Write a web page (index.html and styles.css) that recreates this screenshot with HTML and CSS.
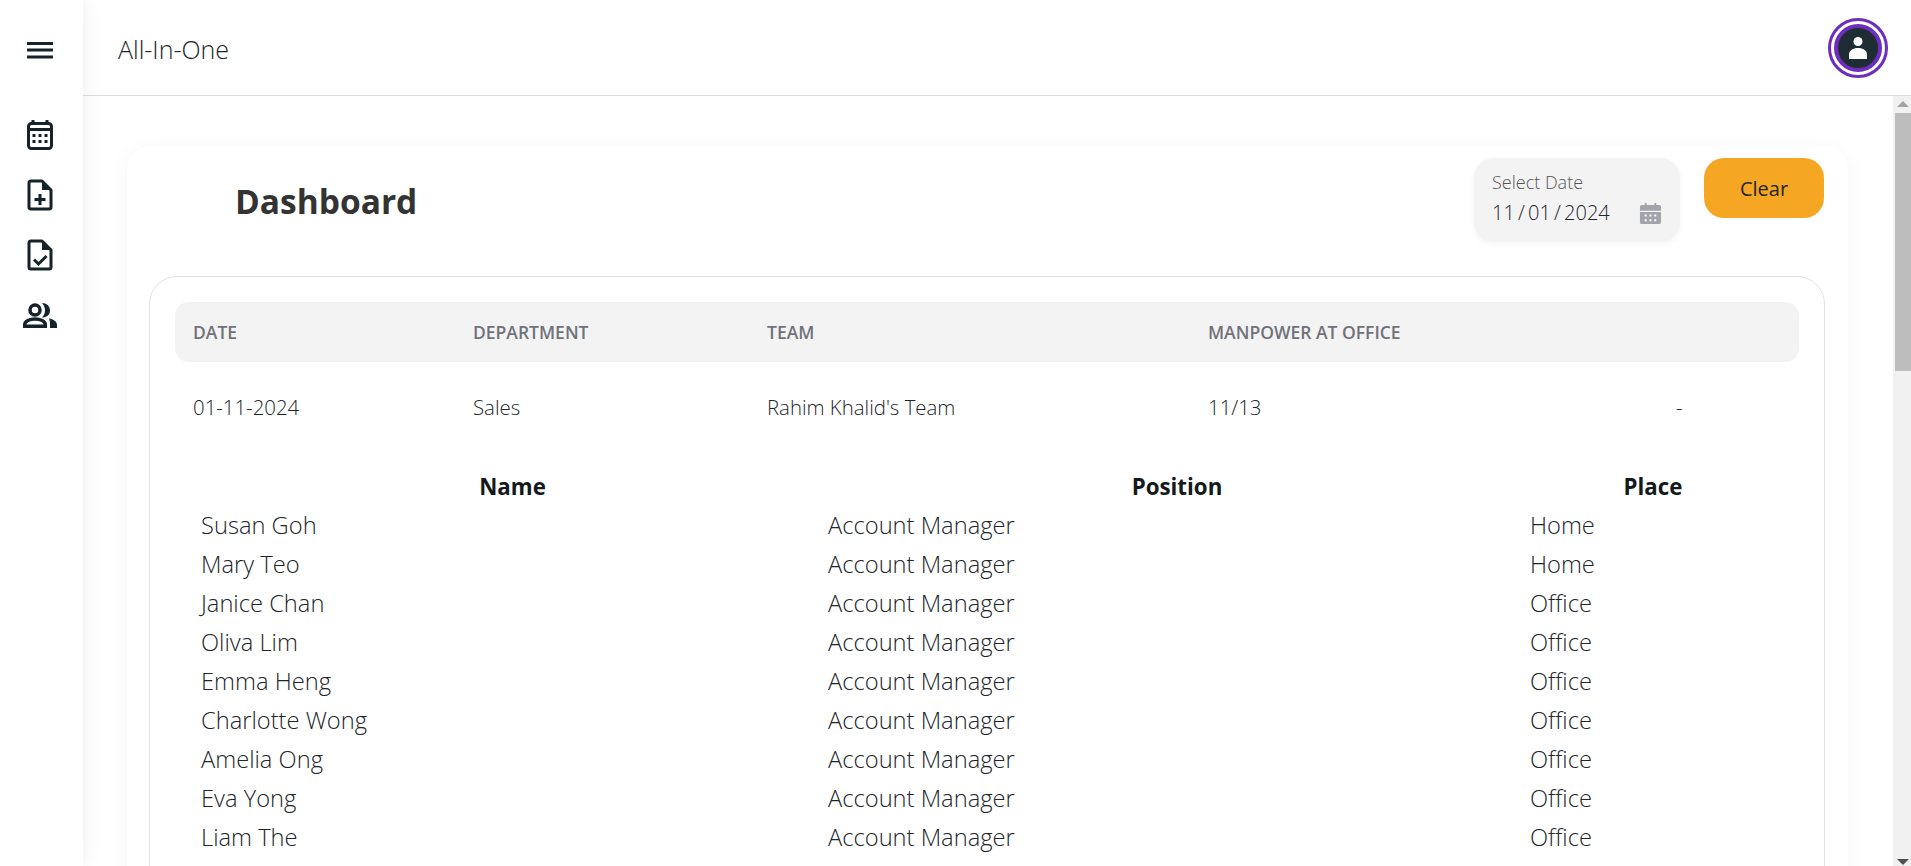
FILE: index.html
```html
<!DOCTYPE html>
<html lang="en">
<head>
    <meta charset="UTF-8">
    <meta name="viewport" content="width=device-width, initial-scale=1.0">
    <title>All-In-One</title>
    <link rel="stylesheet" href="styles.css">
</head>
<body>

<aside class="sidebar">
    <button class="side-btn menu-btn" aria-label="Menu">
        <svg width="28" height="18" viewBox="0 0 28 18"><path d="M1 2.500h26M1 9h26M1 16h26" stroke="#14232a" stroke-width="3"/></svg>
    </button>
    <nav class="side-nav">
        <a class="side-btn" href="#" aria-label="Calendar">
            <svg width="28" height="32" viewBox="0 0 28 32">
                <path d="M7 1v5M21 1v5" stroke="#14232a" stroke-width="3"/>
                <rect x="2.500" y="4.500" width="23" height="25" rx="3" fill="none" stroke="#14232a" stroke-width="3"/>
                <path d="M2.500 10.500h23" stroke="#14232a" stroke-width="3"/>
                <path d="M6.500 15h3v3h-3zM12.500 15h3v3h-3zM18.500 15h3v3h-3zM6.500 21h3v3h-3zM12.500 21h3v3h-3zM18.500 21h3v3h-3z" fill="#14232a"/>
            </svg>
        </a>
        <a class="side-btn" href="#" aria-label="New request">
            <svg width="26" height="32" viewBox="0 0 26 32">
                <path d="M4 2h11l9 9v17a2 2 0 0 1-2 2H4a2 2 0 0 1-2-2V4a2 2 0 0 1 2-2z" fill="none" stroke="#14232a" stroke-width="3" stroke-linejoin="round"/>
                <path d="M15 2l9 9h-9z" fill="#14232a"/>
                <path d="M13 15v11M7.500 20.500h11" stroke="#14232a" stroke-width="3"/>
            </svg>
        </a>
        <a class="side-btn" href="#" aria-label="Approvals">
            <svg width="26" height="32" viewBox="0 0 26 32">
                <path d="M4 2h11l9 9v17a2 2 0 0 1-2 2H4a2 2 0 0 1-2-2V4a2 2 0 0 1 2-2z" fill="none" stroke="#14232a" stroke-width="3" stroke-linejoin="round"/>
                <path d="M15 2l9 9h-9z" fill="#14232a"/>
                <path d="M7 20.500l4.500 4.500 8-8" fill="none" stroke="#14232a" stroke-width="3"/>
            </svg>
        </a>
        <a class="side-btn" href="#" aria-label="Team">
            <svg width="34" height="26" viewBox="0 0 34 26">
                <circle cx="12" cy="8" r="5" fill="none" stroke="#14232a" stroke-width="3.500"/>
                <path d="M1.700 24.300v-1.800c0-3.300 5-5.500 10.300-5.500s10.300 2.200 10.300 5.500v1.800z" fill="none" stroke="#14232a" stroke-width="3.400"/>
                <path d="M19 1c4.500 0 8 3 8 7.500s-3.500 7-8 7c2-2 3-4.300 3-7s-1-5.500-3-7.500z" fill="#14232a"/>
                <path d="M26 16.500c4.500.8 8 3 8 6.500v3h-7v-3c0-2.500-.2-4.500-1-6.500z" fill="#14232a"/>
            </svg>
        </a>
    </nav>
</aside>

<div class="page">
    <header class="topbar">
        <span class="app-name">All-In-One</span>
        <div class="avatar">
            <div class="avatar-inner">
                <svg width="18" height="22" viewBox="0 0 18 22">
                    <circle cx="9" cy="4.500" r="4.500" fill="#fff"/>
                    <path d="M0 22v-4.500C0 13.500 4 11 9 11s9 2.500 9 6.500V22z" fill="#fff"/>
                </svg>
            </div>
        </div>
    </header>

    <div class="content-wrap">
        <main class="content">
            <section class="panel">
                <div class="panel-head">
                    <h1>Dashboard</h1>
                    <div class="panel-actions">
                        <div class="date-field">
                            <label>Select Date</label>
                            <div class="date-value">
                                <span>11 / 01 / 2024</span>
                                <svg width="23" height="23" viewBox="0 0 24 24">
                                    <path d="M6 1h2v3H6zM16 1h2v3h-2z" fill="#a3a3ab"/>
                                    <path d="M3 3h18a2 2 0 0 1 2 2v4H1V5a2 2 0 0 1 2-2zM1 10.500h22V21a2 2 0 0 1-2 2H3a2 2 0 0 1-2-2z" fill="#a3a3ab"/>
                                    <path d="M6 13h2v2H6zM11 13h2v2h-2zM16 13h2v2h-2zM6 18h2v2H6zM11 18h2v2h-2zM16 18h2v2h-2z" fill="#fff"/>
                                </svg>
                            </div>
                        </div>
                        <button class="clear-btn">Clear</button>
                    </div>
                </div>

                <div class="table-card">
                    <div class="summary-row summary-head">
                        <span>DATE</span>
                        <span>DEPARTMENT</span>
                        <span>TEAM</span>
                        <span>MANPOWER AT OFFICE</span>
                        <span></span>
                    </div>
                    <div class="summary-row">
                        <span>01-11-2024</span>
                        <span>Sales</span>
                        <span>Rahim Khalid's Team</span>
                        <span>11/13</span>
                        <span class="summary-more">-</span>
                    </div>

                    <table class="members">
                        <thead>
                            <tr><th>Name</th><th>Position</th><th>Place</th></tr>
                        </thead>
                        <tbody>
                            <tr><td>Susan Goh</td><td>Account Manager</td><td>Home</td></tr>
                            <tr><td>Mary Teo</td><td>Account Manager</td><td>Home</td></tr>
                            <tr><td>Janice Chan</td><td>Account Manager</td><td>Office</td></tr>
                            <tr><td>Oliva Lim</td><td>Account Manager</td><td>Office</td></tr>
                            <tr><td>Emma Heng</td><td>Account Manager</td><td>Office</td></tr>
                            <tr><td>Charlotte Wong</td><td>Account Manager</td><td>Office</td></tr>
                            <tr><td>Amelia Ong</td><td>Account Manager</td><td>Office</td></tr>
                            <tr><td>Eva Yong</td><td>Account Manager</td><td>Office</td></tr>
                            <tr><td>Liam The</td><td>Account Manager</td><td>Office</td></tr>
                        </tbody>
                    </table>
                </div>
            </section>
        </main>

        <div class="scrollbar">
            <span class="arrow arrow-up"></span>
            <span class="thumb"></span>
            <span class="track-fill"></span>
            <span class="arrow arrow-down"></span>
        </div>
    </div>
</div>

</body>
</html>
```

FILE: styles.css
```css
* {
    box-sizing: border-box;
}
html, body {
    height: 100%;
}
body {
    margin: 0;
    display: flex;
    overflow: hidden;
    font-family: "Open Sans", "Noto Sans", sans-serif;
    background-color: #ffffff;
    color: #212529;
}

/* sidebar */
.sidebar {
    width: 83px;
    flex: none;
    display: flex;
    flex-direction: column;
    align-items: center;
    padding-right: 3px;
    background-color: #ffffff;
    box-shadow: 0 0 20px rgba(0, 0, 0, 0.07);
    position: relative;
    z-index: 2;
}
.side-btn {
    display: flex;
    align-items: center;
    justify-content: center;
    width: 60px;
    height: 60px;
    background: none;
    border: none;
    padding: 0;
}
.menu-btn {
    margin-top: 20px;
}
.side-nav {
    display: flex;
    flex-direction: column;
    margin-top: 25px;
}

/* top bar */
.page {
    flex: 1;
    min-width: 0;
    display: flex;
    flex-direction: column;
}
.topbar {
    height: 96px;
    flex: none;
    display: flex;
    align-items: center;
    justify-content: space-between;
    padding: 0 23px 0 35px;
    border-bottom: 1px solid #dcdcdc;
    background-color: #ffffff;
}
.app-name {
    margin-top: 3px;
    font-size: 25px;
    font-weight: 300;
    color: #212529;
}
.avatar {
    width: 60px;
    height: 60px;
    padding: 3px;
    border-radius: 50%;
    border: 3px solid #6f2dbd;
    background-color: #ffffff;
}
.avatar-inner {
    width: 100%;
    height: 100%;
    border-radius: 50%;
    display: flex;
    align-items: center;
    justify-content: center;
    background-color: #1e2d33;
    border: 4px solid #6f2dbd;
}

/* content */
.content-wrap {
    flex: 1;
    min-height: 0;
    display: flex;
}
.content {
    flex: 1;
    min-width: 0;
    overflow: hidden;
    padding: 50px 45px 0 44px;
}
.panel {
    height: 900px;
    padding: 12px 23px 0 22px;
    border-radius: 24px;
    background-color: #ffffff;
    box-shadow: 0 4px 24px rgba(0, 0, 0, 0.045);
}
.panel-head {
    display: flex;
    justify-content: space-between;
    align-items: flex-start;
    height: 118px;
}
.panel-head h1 {
    margin: 20px 0 0 86px;
    font-size: 33.500px;
    font-weight: 700;
    color: #333333;
}
.panel-actions {
    display: flex;
    gap: 24px;
    margin-right: 1px;
}
.date-field {
    width: 206px;
    height: 84px;
    padding: 12px 18px;
    border-radius: 20px;
    background-color: #f3f3f3;
    box-shadow: 0 2px 6px rgba(0, 0, 0, 0.05);
}
.date-field label {
    display: block;
    font-size: 18px;
    font-weight: 300;
    line-height: 24px;
    color: #555555;
}
.date-value {
    display: flex;
    justify-content: space-between;
    align-items: center;
    margin-top: 4px;
    font-size: 20px;
    font-weight: 300;
    line-height: 30px;
    word-spacing: -2px;
}
.clear-btn {
    width: 120px;
    height: 60px;
    border: none;
    border-radius: 20px;
    background-color: #f5a623;
    font-family: inherit;
    font-size: 20px;
    color: #212529;
}

/* table card */
.table-card {
    height: 700px;
    padding: 25px 25px;
    border: 1px solid #e2e2e2;
    border-radius: 28px;
    background-color: #ffffff;
}
.summary-row {
    display: grid;
    grid-template-columns: 280px 294px 441px 1fr 120px;
    align-items: center;
    padding: 0 18px;
    font-size: 20.400px;
    font-weight: 300;
    height: 90px;
}
.summary-head {
    height: 60px;
    font-size: 17.500px;
    font-weight: 600;
    color: #71717a;
    background-color: #f3f3f3;
    border-radius: 14px;
}
.summary-more {
    padding-left: 15px;
}
.members {
    width: calc(100% - 36px);
    margin: 14px 18px 0;
    border-collapse: collapse;
    table-layout: fixed;
    font-size: 23.700px;
    font-weight: 300;
}
.members th {
    height: 39px;
    padding: 2px 8px 0;
    font-size: 22.300px;
    font-weight: 700;
    text-align: center;
    color: #14191c;
}
.members td {
    height: 39px;
    padding: 0 8px;
}
.members th:nth-child(1) {
    width: 627px;
    padding-left: 20px;
}
.members th:nth-child(2) {
    width: 702px;
    padding-left: 20px;
}
.members th:nth-child(3) {
    padding-left: 11px;
}

/* fake window scrollbar, the page itself does not scroll in this view */
.scrollbar {
    width: 18px;
    flex: none;
    display: flex;
    flex-direction: column;
    align-items: flex-end;
    background-color: #f1f1f1;
}
.arrow {
    width: 16px;
    height: 17px;
    flex: none;
    position: relative;
}
.arrow-up::after, .arrow-down::after {
    content: "";
    position: absolute;
    left: 2px;
    border-left: 6px solid transparent;
    border-right: 6px solid transparent;
}
.arrow-up::after {
    top: 5px;
    border-bottom: 6px solid #a3a3a3;
}
.arrow-down::after {
    bottom: 1px;
    border-top: 6px solid #505050;
}
.thumb {
    width: 16px;
    height: 258px;
    flex: none;
    background-color: #bdbdbd;
}
.track-fill {
    flex: 1;
}
```
